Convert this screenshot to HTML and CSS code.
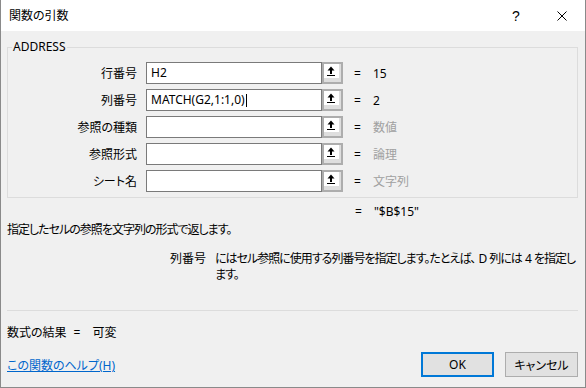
FILE: index.html
```html
<!DOCTYPE html>
<html lang="ja">
<head>
<meta charset="utf-8">
<title>関数の引数</title>
<link rel="stylesheet" href="styles.css">
</head>
<body>
<div class="window">
  <div class="titlebar">
    <span class="title">関数の引数</span>
    <span class="cap-btn help">?</span>
    <span class="cap-btn close">
      <svg width="10" height="10" viewBox="0 0 10 10"><path d="M0.5 0.5 L9.5 9.5 M9.5 0.5 L0.5 9.5" stroke="#000" stroke-width="1" fill="none"/></svg>
    </span>
  </div>
  <div class="content">
    <fieldset class="group">
      <legend class="legend">ADDRESS</legend>
      <div class="rows">
        <div class="row">
          <span class="label">行番号</span>
          <span class="field">H2</span>
          <span class="ref"><span class="ref-face"><svg width="15" height="14" viewBox="0 0 15 14"><path d="M7 2.5 L10.5 6.5 L8 6.5 L8 10 L6 10 L6 6.5 L3.5 6.5 Z" fill="#000"/><rect x="3" y="11" width="8" height="1" fill="#000"/></svg></span></span>
          <span class="eq">=</span>
          <span class="val">15</span>
        </div>
        <div class="row">
          <span class="label">列番号</span>
          <span class="field">MATCH(G2,1:1,0)<span class="caret"></span></span>
          <span class="ref"><span class="ref-face"><svg width="15" height="14" viewBox="0 0 15 14"><path d="M7 2.5 L10.5 6.5 L8 6.5 L8 10 L6 10 L6 6.5 L3.5 6.5 Z" fill="#000"/><rect x="3" y="11" width="8" height="1" fill="#000"/></svg></span></span>
          <span class="eq">=</span>
          <span class="val">2</span>
        </div>
        <div class="row">
          <span class="label">参照の種類</span>
          <span class="field"></span>
          <span class="ref"><span class="ref-face"><svg width="15" height="14" viewBox="0 0 15 14"><path d="M7 2.5 L10.5 6.5 L8 6.5 L8 10 L6 10 L6 6.5 L3.5 6.5 Z" fill="#000"/><rect x="3" y="11" width="8" height="1" fill="#000"/></svg></span></span>
          <span class="eq">=</span>
          <span class="val muted">数値</span>
        </div>
        <div class="row">
          <span class="label">参照形式</span>
          <span class="field"></span>
          <span class="ref"><span class="ref-face"><svg width="15" height="14" viewBox="0 0 15 14"><path d="M7 2.5 L10.5 6.5 L8 6.5 L8 10 L6 10 L6 6.5 L3.5 6.5 Z" fill="#000"/><rect x="3" y="11" width="8" height="1" fill="#000"/></svg></span></span>
          <span class="eq">=</span>
          <span class="val muted">論理</span>
        </div>
        <div class="row">
          <span class="label">シート名</span>
          <span class="field"></span>
          <span class="ref"><span class="ref-face"><svg width="15" height="14" viewBox="0 0 15 14"><path d="M7 2.5 L10.5 6.5 L8 6.5 L8 10 L6 10 L6 6.5 L3.5 6.5 Z" fill="#000"/><rect x="3" y="11" width="8" height="1" fill="#000"/></svg></span></span>
          <span class="eq">=</span>
          <span class="val muted">文字列</span>
        </div>
      </div>
    </fieldset>
    <div class="result"><span class="eq-r">=</span><span class="val-r">"$B$15"</span></div>
    <div class="desc">指定したセルの参照を文字列の形式で返します。</div>
    <div class="arg">
      <span class="arg-name">列番号</span>
      <span class="arg-text">にはセル参照に使用する列番号を指定します。たとえば、 D 列には 4 を指定し<br>ます。</span>
    </div>
    <div class="sep"></div>
    <div class="formula">数式の結果<span class="f-eq">=</span><span class="f-val">可変</span></div>
    <div class="footer">
      <a class="help-link" href="#">この関数のヘルプ(H)</a>
      <span class="btn btn-ok">OK</span>
      <span class="btn btn-cancel">キャンセル</span>
    </div>
  </div>
</div>
</body>
</html>
```

FILE: styles.css
```css
* { box-sizing: border-box; }
html, body { margin: 0; padding: 0; }
body {
  font-family: "Noto Sans", "Noto Sans CJK JP", sans-serif;
  font-size: 12px;
  color: #000;
  font-feature-settings: "palt" 1;
  background: #f0f0f0;
}
.window {
  width: 586px;
  height: 388px;
  background: #f0f0f0;
  border: 1px solid #8a8a8a;
  border-top: none;
  overflow: hidden;
}
.titlebar {
  height: 31px;
  background: #fff;
  display: flex;
  align-items: center;
}
.title {
  flex: 1;
  padding-left: 8px;
  line-height: 16px;
}
.cap-btn {
  width: 46px;
  height: 31px;
  display: flex;
  align-items: center;
  justify-content: center;
}
.help {
  font-size: 14px;
  font-family: "Liberation Sans", sans-serif;
}
.content {
  padding: 9px 7px 0 6px;
}
.group {
  margin: 0;
  padding: 8px 0 5px 0;
  border: 1px solid #dcdcdc;
  min-width: 0;
}
.legend {
  margin-left: 4px;
  padding: 0 1px;
  line-height: 14px;
}
.rows {
  display: flex;
  flex-direction: column;
  gap: 5px;
}
.row {
  display: flex;
  align-items: center;
  height: 22px;
}
.label {
  width: 129px;
  margin-right: 9px;
  text-align: right;
  flex-shrink: 0;
}
.field {
  width: 176px;
  height: 22px;
  background: #fff;
  border: 1px solid #7a7a7a;
  padding-left: 4px;
  display: flex;
  align-items: center;
  line-height: 16px;
  flex-shrink: 0;
}
.caret {
  display: inline-block;
  width: 1px;
  height: 13px;
  background: #000;
  margin-left: 1px;
}
.ref {
  width: 21px;
  height: 22px;
  border: 2px solid #adadad;
  background: #dedede;
  padding: 0 2px 4px 0;
  flex-shrink: 0;
}
.ref-face {
  display: block;
  width: 15px;
  height: 14px;
  background: #fff;
}
.ref-face svg { display: block; }
.eq {
  margin-left: 11px;
  width: 7px;
}
.val {
  margin-left: 12px;
}
.muted { color: #a0a0a0; }
.result {
  margin-top: 6px;
  padding-left: 348px;
  line-height: 16px;
}
.val-r { margin-left: 12px; }
.desc {
  margin-top: 2px;
  line-height: 16px;
  letter-spacing: -1px;
}
.arg {
  margin-top: 13px;
  display: flex;
  line-height: 16px;
  padding-left: 163px;
  height: 32px;
}
.arg-name {
  margin-right: 9px;
  white-space: nowrap;
  flex-shrink: 0;
}
.arg-text {
  white-space: nowrap;
  letter-spacing: -1px;
  word-spacing: 1px;
}
.sep {
  margin-top: 27px;
  height: 1px;
  background: #dcdcdc;
}
.formula {
  margin-top: 14px;
  line-height: 16px;
}
.f-eq { margin-left: 7px; }
.f-val { margin-left: 12px; }
.footer {
  margin-top: 11px;
  display: flex;
  align-items: center;
}
.help-link {
  flex: 1;
  color: #0066cc;
  text-decoration: underline;
  line-height: 16px;
  padding-top: 3px;
}
.btn {
  width: 73px;
  height: 25px;
  background: #e1e1e1;
  display: flex;
  align-items: center;
  justify-content: center;
  flex-shrink: 0;
}
.btn-ok {
  border: 2px solid #0078d7;
  margin-right: 11px;
}
.btn-cancel {
  border: 1px solid #adadad;
}
```
